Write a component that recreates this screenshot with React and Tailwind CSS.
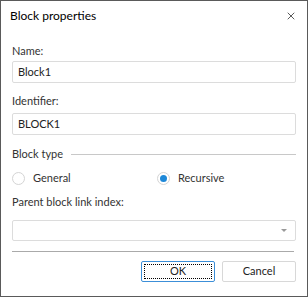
import { X } from 'lucide-react';

const font = { fontFamily: 'Lato, "Open Sans", sans-serif' };

const Field = ({ value }) => (
  <div className="h-[22px] border border-[#dcdcdc] rounded-[2px] flex items-center px-[5px] text-[11px] text-[#222]">
    {value}
  </div>
);

const Radio = ({ checked, label }) => (
  <div className="flex items-center gap-[8px]">
    <div className="w-[13px] h-[13px] rounded-full border border-[#d4d4d4] flex items-center justify-center">
      {checked && <div className="w-[7px] h-[7px] rounded-full bg-[#1e88d8]" />}
    </div>
    <span className="text-[11px] text-[#333]">{label}</span>
  </div>
);

export default function App() {
  return (
    <div
      className="w-[308px] h-[297px] bg-white border border-[#5a5a5a] flex flex-col text-[#333]"
      style={font}
    >
      {/* Title bar */}
      <div className="h-[30px] flex items-center justify-between pl-[9px] pr-[10px]">
        <span className="text-[12px] text-black">Block properties</span>
        <X className="w-[12px] h-[12px] text-black" strokeWidth={1.3} />
      </div>

      <div className="px-[11px] flex flex-col">
        <label className="mt-[12px] text-[11px] leading-[16px]">Name:</label>
        <div className="mt-[2px]"><Field value="Block1" /></div>

        <label className="mt-[10px] text-[11px] leading-[16px]">Identifier:</label>
        <div className="mt-[4px]"><Field value="BLOCK1" /></div>

        {/* Block type group */}
        <div className="mt-[11px] flex items-center gap-[8px] h-[16px]">
          <span className="text-[11px]">Block type</span>
          <div className="flex-1 h-px bg-[#c8c8c8]" />
        </div>
        <div className="mt-[8px] flex items-center h-[16px]">
          <div className="w-[145px]"><Radio label="General" /></div>
          <Radio checked label="Recursive" />
        </div>

        <label className="mt-[8px] text-[11px] leading-[16px]">Parent block link index:</label>
        <div className="mt-[10px] h-[21px] border border-[#dcdcdc] rounded-[2px] flex items-center justify-end pr-[8px]">
          <div className="w-0 h-0 border-l-[3px] border-r-[3px] border-t-[3px] border-l-transparent border-r-transparent border-t-[#999]" />
        </div>

        <div className="mt-[10px] mr-[2px] h-px bg-[#aaa]" />

        {/* Buttons */}
        <div className="mt-[9px] flex justify-end gap-[7px]">
          <button className="w-[74px] h-[21px] border border-[#3c8fd8] rounded-[2px] p-[2px] text-[11px] text-[#222]">
            <div className="w-full h-full border border-dotted border-black flex items-center justify-center">OK</div>
          </button>
          <button className="w-[74px] h-[21px] border border-[#d8d8d8] rounded-[2px] text-[11px] text-[#222] flex items-center justify-center">
            Cancel
          </button>
        </div>
      </div>
    </div>
  );
}
